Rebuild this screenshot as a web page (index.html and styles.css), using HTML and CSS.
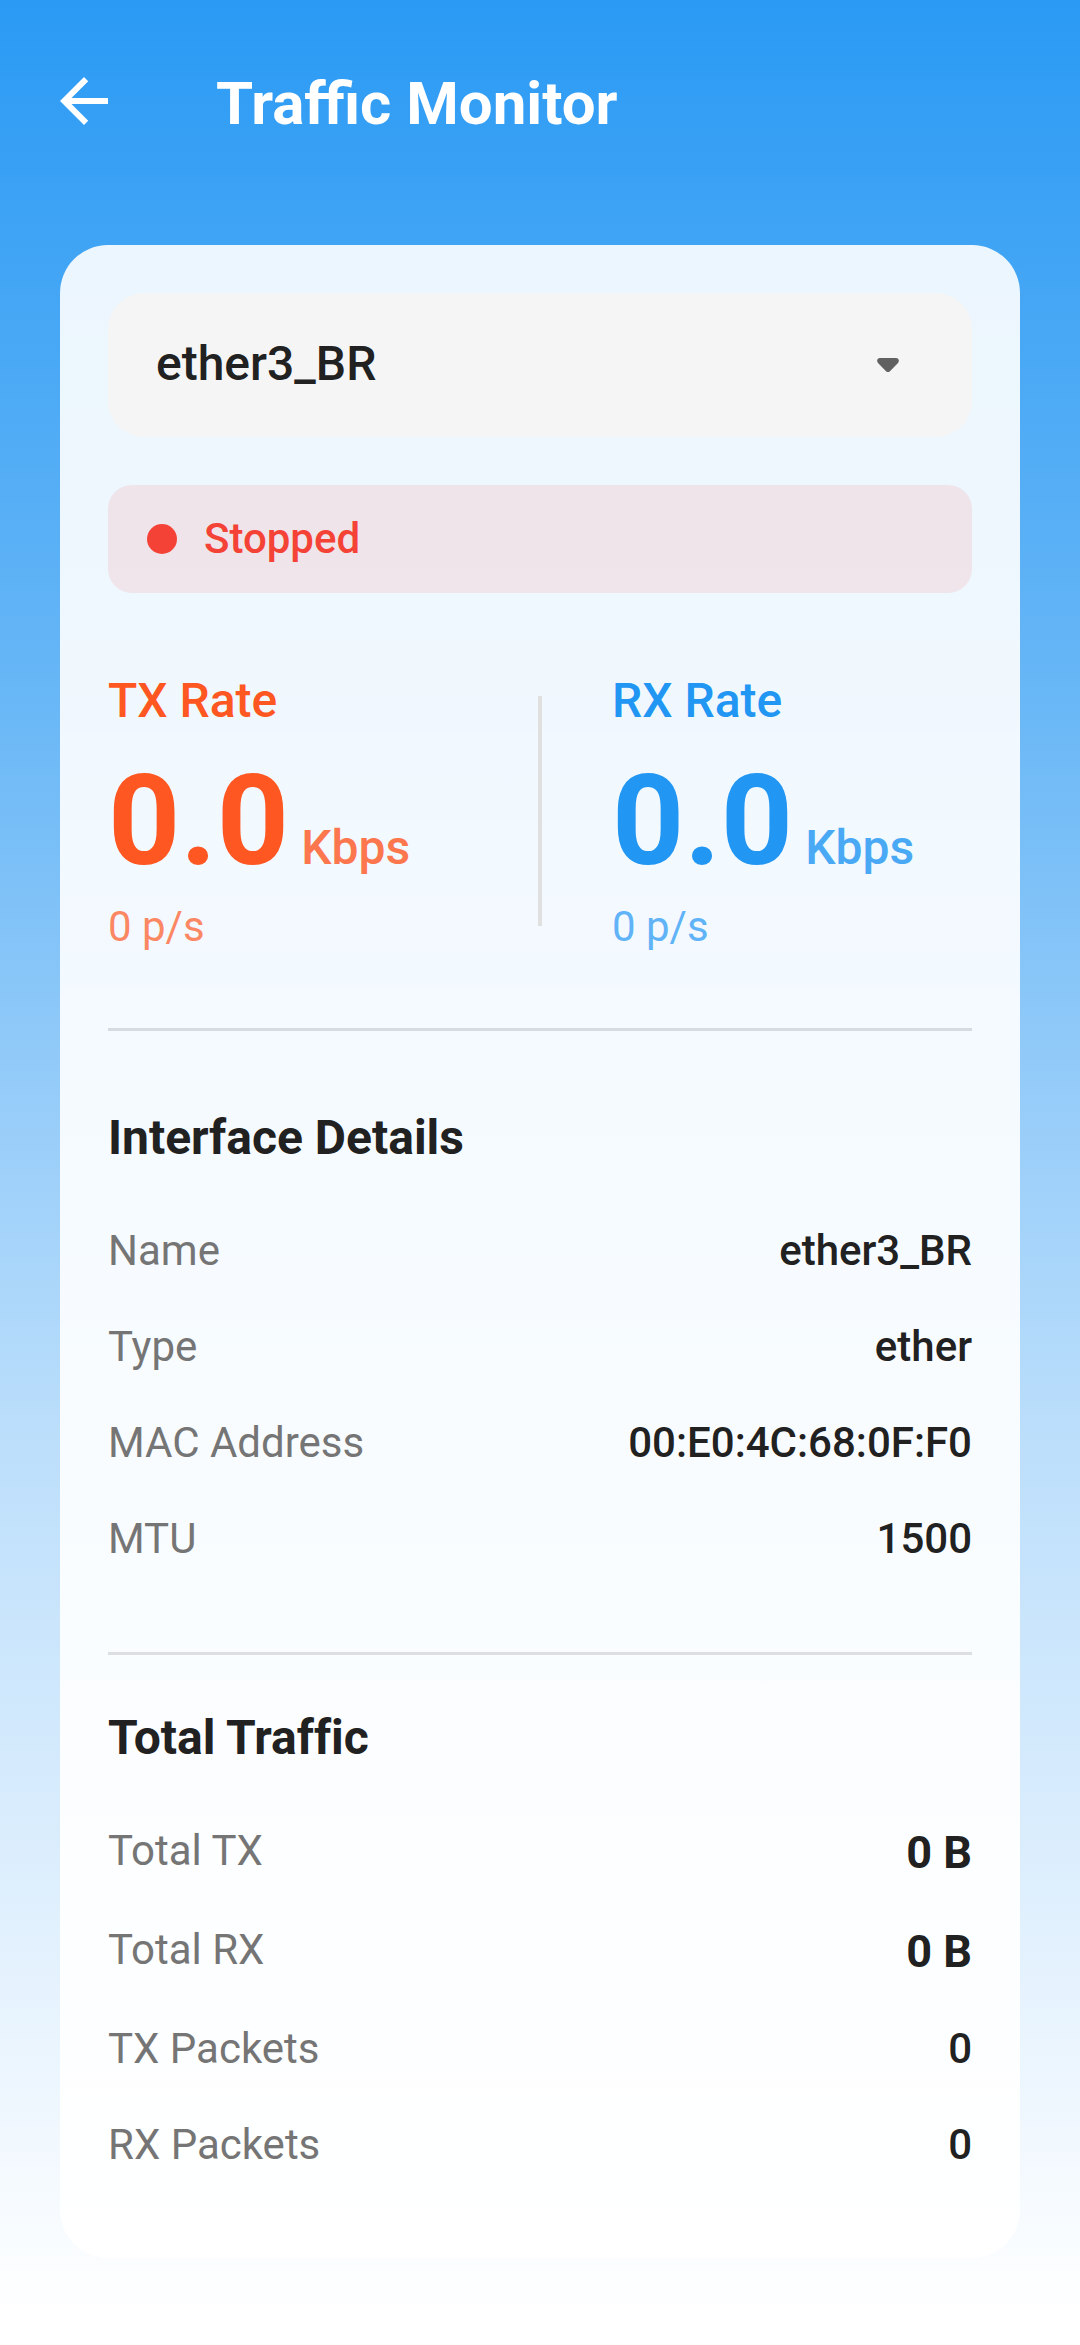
FILE: index.html
```html
<!DOCTYPE html>
<html lang="en">
<head>
<meta charset="utf-8">
<meta name="viewport" content="width=device-width, initial-scale=1">
<title>Traffic Monitor</title>
<link rel="stylesheet" href="styles.css">
</head>
<body>
<header class="app-bar">
  <button class="back" type="button" aria-label="Back">
    <svg viewBox="0 0 24 24" aria-hidden="true"><path d="M20 11H7.83l5.59-5.59L12 4l-8 8 8 8 1.41-1.41L7.83 13H20v-2z"/></svg>
  </button>
  <h1 class="title">Traffic Monitor</h1>
</header>
<main class="card">
  <div class="picker">
    <select class="picker-select" aria-label="Interface">
      <option>ether3_BR</option>
    </select>
    <svg class="picker-arrow" viewBox="0 0 22 14" aria-hidden="true"><path d="M3 0h16c2.600 0 3.800 3 2 4.900l-7.800 8a3 3 0 0 1-4.400 0L1 4.900C-.8 3 .4 0 3 0z"/></svg>
  </div>
  <div class="status" role="status">
    <span class="status-dot"></span>
    <span>Stopped</span>
  </div>
  <section class="rates">
    <div class="rate rate-tx">
      <div class="rate-label">TX Rate</div>
      <div class="rate-value"><span class="rate-number">0.0</span><span class="rate-unit">Kbps</span></div>
      <div class="rate-packets">0 p/s</div>
    </div>
    <div class="rate-divider"></div>
    <div class="rate rate-rx">
      <div class="rate-label">RX Rate</div>
      <div class="rate-value"><span class="rate-number">0.0</span><span class="rate-unit">Kbps</span></div>
      <div class="rate-packets">0 p/s</div>
    </div>
  </section>
  <section class="section section-details">
    <h2 class="section-title">Interface Details</h2>
    <dl class="rows">
      <div class="row"><dt>Name</dt><dd>ether3_BR</dd></div>
      <div class="row"><dt>Type</dt><dd>ether</dd></div>
      <div class="row"><dt>MAC Address</dt><dd>00:E0:4C:68:0F:F0</dd></div>
      <div class="row"><dt>MTU</dt><dd>1500</dd></div>
    </dl>
  </section>
  <section class="section">
    <h2 class="section-title">Total Traffic</h2>
    <dl class="rows">
      <div class="row"><dt>Total TX</dt><dd class="total">0 B</dd></div>
      <div class="row"><dt>Total RX</dt><dd class="total">0 B</dd></div>
      <div class="row"><dt>TX Packets</dt><dd>0</dd></div>
      <div class="row"><dt>RX Packets</dt><dd>0</dd></div>
    </dl>
  </section>
</main>
</body>
</html>
```
FILE: styles.css
```css
* {
  box-sizing: border-box;
}

body {
  margin: 0;
  min-height: 100vh;
  padding-bottom: 86px;
  font-family: Roboto, "Noto Sans", sans-serif;
  font-size: 42px;
  line-height: 60px;
  color: #212121;
  background: linear-gradient(#2a9af4 0%, #64b5f6 28%, #bbdefb 61%, #ffffff 99%);
}

h1,
h2,
dl,
dd {
  margin: 0;
}

.app-bar {
  display: flex;
  align-items: center;
  gap: 96px;
  padding: 60px 48px 97px;
  color: #ffffff;
}

.back {
  width: 72px;
  height: 88px;
  padding: 0 0 6px;
  border: 0;
  background: none;
  color: inherit;
}

.back svg {
  display: block;
  width: 72px;
  height: 72px;
  fill: currentColor;
}

.title {
  font-size: 60px;
  line-height: 88px;
  font-weight: 700;
}

.card {
  margin: 0 60px;
  padding: 48px;
  border-radius: 48px;
  background: rgba(255, 255, 255, 0.9);
}

.picker {
  display: grid;
  align-items: center;
}

.picker-select,
.picker-arrow {
  grid-area: 1 / 1;
}

.picker-select {
  width: 100%;
  height: 144px;
  padding: 0 120px 2px 48px;
  border: 0;
  border-radius: 36px;
  appearance: none;
  background: #f5f5f5;
  color: inherit;
  font: 500 48px/72px Roboto, "Noto Sans", sans-serif;
}

.picker-arrow {
  justify-self: end;
  width: 22px;
  height: 14px;
  margin-right: 73px;
  fill: #616161;
  pointer-events: none;
}

.status {
  display: flex;
  align-items: center;
  gap: 27px;
  margin-top: 48px;
  padding: 24px 39px;
  border-radius: 24px;
  background: rgba(244, 67, 54, 0.1);
  color: #f44336;
  font-weight: 500;
}

.status-dot {
  width: 30px;
  height: 30px;
  border-radius: 50%;
  background: currentColor;
}

.rates {
  display: grid;
  grid-template-columns: 1fr 4px 1fr;
  align-items: center;
  padding: 72px 0 71px;
}

.rate-divider {
  height: 230px;
  background: #e0e0e0;
}

.rate-tx {
  color: #ff5722;
}

.rate-rx {
  padding-left: 70px;
  color: #2196f3;
}

.rate-label {
  font-size: 48px;
  line-height: 72px;
  font-weight: 500;
}

.rate-value {
  display: flex;
  align-items: baseline;
  gap: 12px;
  margin: 12px 0 4px;
}

.rate-number {
  font-size: 126px;
  line-height: 144px;
  font-weight: 700;
}

.rate-unit {
  font-size: 48px;
  line-height: 72px;
  font-weight: 500;
  opacity: 0.8;
}

.rate-packets {
  opacity: 0.7;
}

.section {
  padding: 47px 0 17px;
  border-top: 3px solid #dcdee1;
}

.section-details {
  padding: 71px 0 65px;
  border-top-color: #d5dbe0;
}

.section-title {
  margin-bottom: 29px;
  font-size: 48px;
  line-height: 72px;
  font-weight: 700;
  font-variant-ligatures: none;
}

.row {
  display: flex;
  justify-content: space-between;
  align-items: flex-start;
  padding: 18px 0;
}

.row dt {
  color: #757575;
}

.row dd {
  font-weight: 500;
}

.row .total {
  font-size: 45px;
  line-height: 63px;
  font-weight: 700;
}
```
